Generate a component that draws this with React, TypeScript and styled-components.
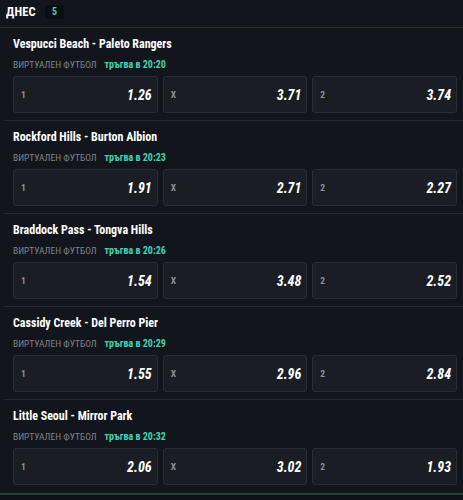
import React from "react";
import styled, { createGlobalStyle } from "styled-components";

const Global = createGlobalStyle`
  html, body { margin: 0; padding: 0; background: #0e1116; }
  body {
    font-family: "Roboto Condensed", "Roboto", "DejaVu Sans Condensed", sans-serif;
    font-stretch: condensed;
  }
  * { box-sizing: border-box; }
`;

const Section = styled.section`
  width: 463px;
  background: #12151c;
  border-bottom: 2px solid #24403d;
`;

const Header = styled.div`
  display: flex;
  align-items: center;
  gap: 9px;
  height: 28px;
  padding: 0 0 4px 6px;
  border-bottom: 1px solid #26302f;
`;

const HeaderTitle = styled.span`
  color: #ffffff;
  font-weight: 700;
  font-size: 12.5px;
  letter-spacing: 0.2px;
`;

const Badge = styled.span`
  display: inline-flex;
  align-items: center;
  justify-content: center;
  width: 19px;
  height: 14px;
  border-radius: 2px;
  background: #0a0d12;
  color: #3fd3b2;
  font-size: 10px;
  font-weight: 700;
`;

const Match = styled.div`
  margin-left: 4px;
  padding: 9px 6px 7px 9px;
  border-bottom: 1px solid #262930;
  &:last-child { border-bottom: none; padding-bottom: 8px; }
`;

const Teams = styled.div`
  color: #ffffff;
  font-weight: 700;
  font-size: 12px;
  line-height: 15px;
`;

const Meta = styled.div`
  display: flex;
  gap: 8px;
  margin-top: 6px;
  font-size: 9.5px;
  line-height: 13px;
`;

const Sport = styled.span`
  color: #7f848d;
  text-transform: uppercase;
`;

const Start = styled.span`
  color: #3fd3b2;
  font-weight: 700;
  font-size: 10px;
  & b { font-weight: 700; }
`;

const OddsRow = styled.div`
  display: grid;
  grid-template-columns: repeat(3, 1fr);
  gap: 5px;
  margin-top: 5px;
`;

const Odd = styled.div`
  display: flex;
  align-items: center;
  justify-content: space-between;
  height: 37px;
  padding: 0 5px 0 7px;
  background: #1a1d24;
  border: 1px solid #2a2d35;
  border-radius: 3px;
`;

const OddLabel = styled.span`
  color: #8c9098;
  font-size: 9.5px;
  font-weight: 700;
`;

const OddValue = styled.span`
  color: #ffffff;
  font-size: 14px;
  font-weight: 700;
  font-style: italic;
`;

const matches = [
  { teams: "Vespucci Beach - Paleto Rangers", time: "20:20", odds: ["1.26", "3.71", "3.74"] },
  { teams: "Rockford Hills - Burton Albion", time: "20:23", odds: ["1.91", "2.71", "2.27"] },
  { teams: "Braddock Pass - Tongva Hills", time: "20:26", odds: ["1.54", "3.48", "2.52"] },
  { teams: "Cassidy Creek - Del Perro Pier", time: "20:29", odds: ["1.55", "2.96", "2.84"] },
  { teams: "Little Seoul - Mirror Park", time: "20:32", odds: ["2.06", "3.02", "1.93"] },
];

const labels = ["1", "X", "2"];

export default function App() {
  return (
    <>
      <Global />
      <Section>
        <Header>
          <HeaderTitle>ДНЕС</HeaderTitle>
          <Badge>5</Badge>
        </Header>
        {matches.map((m) => (
          <Match key={m.teams}>
            <Teams>{m.teams}</Teams>
            <Meta>
              <Sport>Виртуален футбол</Sport>
              <Start>
                тръгва в <b>{m.time}</b>
              </Start>
            </Meta>
            <OddsRow>
              {m.odds.map((o, i) => (
                <Odd key={i}>
                  <OddLabel>{labels[i]}</OddLabel>
                  <OddValue>{o}</OddValue>
                </Odd>
              ))}
            </OddsRow>
          </Match>
        ))}
      </Section>
    </>
  );
}
